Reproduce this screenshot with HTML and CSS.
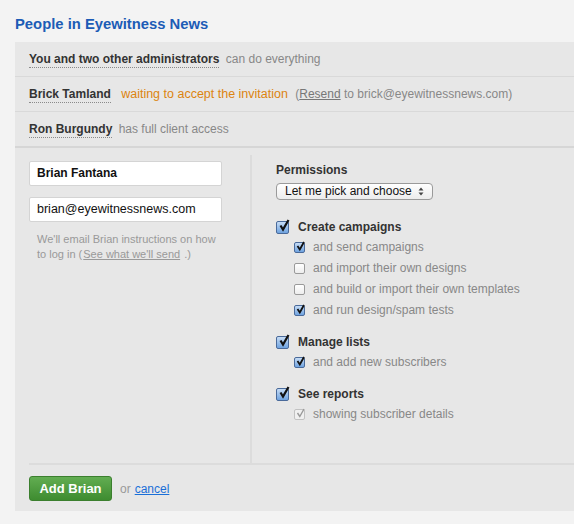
FILE: index.html
```html
<!DOCTYPE html>
<html>
<head>
<meta charset="utf-8">
<link rel="stylesheet" href="styles.css">
</head>
<body>
<h1 class="title">People in Eyewitness News</h1>
<div class="panel">
  <div class="row"><span class="who">You and two other administrators</span> <span class="desc">can do everything</span></div>
  <div class="row"><span class="who">Brick Tamland</span> <span class="pending">waiting to accept the invitation</span> <span class="desc">(<a class="ulink" href="#">Resend</a> to brick@eyewitnessnews.com)</span></div>
  <div class="row"><span class="who">Ron Burgundy</span> <span class="desc">has full client access</span></div>
  <div class="form">
    <div class="cols">
      <div class="left">
        <div class="input bold">Brian Fantana</div>
        <div class="input">brian@eyewitnessnews.com</div>
        <p class="help"><span class="help-line">We'll email Brian instructions on how</span><span class="help-line">to log in (<a class="ulink" href="#">See what we'll send</a> .)</span></p>
      </div>
      <div class="right">
        <div class="perm-title">Permissions</div>
        <div class="select"><span>Let me pick and choose</span>
          <svg class="arrows" width="6" height="9" viewBox="0 0 6 9"><path d="M3 0.5 L5.5 3.5 H0.5 Z M3 8.5 L5.5 5.5 H0.5 Z" fill="#444"/></svg>
        </div>
        <div class="group">
          <div class="main"><span class="cb big on"><svg viewBox="0 0 14 14"><path d="M3.5 6.5 L6 10.5 L11.5 1" fill="none" stroke="#111" stroke-width="2.2"/></svg></span>Create campaigns</div>
          <div class="sub"><span class="cb on"><svg viewBox="0 0 11 11"><path d="M2.5 5 L4.8 8.5 L9 1" fill="none" stroke="#111" stroke-width="1.8"/></svg></span>and send campaigns</div>
          <div class="sub"><span class="cb"></span>and import their own designs</div>
          <div class="sub"><span class="cb"></span>and build or import their own templates</div>
          <div class="sub"><span class="cb on"><svg viewBox="0 0 11 11"><path d="M2.5 5 L4.8 8.5 L9 1" fill="none" stroke="#111" stroke-width="1.8"/></svg></span>and run design/spam tests</div>
        </div>
        <div class="group">
          <div class="main"><span class="cb big on"><svg viewBox="0 0 14 14"><path d="M3.5 6.5 L6 10.5 L11.5 1" fill="none" stroke="#111" stroke-width="2.2"/></svg></span>Manage lists</div>
          <div class="sub"><span class="cb on"><svg viewBox="0 0 11 11"><path d="M2.5 5 L4.8 8.5 L9 1" fill="none" stroke="#111" stroke-width="1.8"/></svg></span>and add new subscribers</div>
        </div>
        <div class="group">
          <div class="main"><span class="cb big on"><svg viewBox="0 0 14 14"><path d="M3.5 6.5 L6 10.5 L11.5 1" fill="none" stroke="#111" stroke-width="2.2"/></svg></span>See reports</div>
          <div class="sub"><span class="cb dis"><svg viewBox="0 0 11 11"><path d="M2.5 5 L4.8 8.5 L9 1" fill="none" stroke="#999" stroke-width="1.4"/></svg></span>showing subscriber details</div>
        </div>
      </div>
    </div>
    <div class="footer">
      <button class="btn">Add Brian</button>
      <span class="or">or</span> <a class="cancel" href="#">cancel</a>
    </div>
  </div>
</div>
</body>
</html>
```

FILE: styles.css
```css
html, body {
  margin: 0;
  padding: 0;
}
body {
  background: #f3f3f3;
  font-family: "Liberation Sans", Arial, sans-serif;
  font-size: 12px;
  color: #333;
}
.title {
  margin: 0;
  padding: 15px 0 0 15px;
  height: 27px;
  font-size: 14.8px;
  font-weight: bold;
  color: #1c5cb6;
  line-height: 18px;
}
.panel {
  margin-left: 15px;
  background: #e7e7e7;
  height: 469px;
}
.row {
  height: 34px;
  line-height: 34px;
  padding-left: 14px;
  border-bottom: 1px solid #d9d9d9;
  white-space: nowrap;
}
.row:nth-child(3) {
  border-bottom: 2px solid #d6d6d6;
}
.who {
  font-weight: bold;
  color: #333;
  border-bottom: 1px dotted #8a8a8a;
  padding-bottom: 1px;
  margin-right: 3px;
}
.desc {
  color: #888;
}
.pending {
  color: #dc8410;
  font-size: 12.5px;
  margin-left: 4px;
  margin-right: 4px;
}
.ulink {
  color: #777;
  text-decoration: underline;
}
.form {
  padding: 7px 0 0 14px;
}
.cols {
  display: flex;
  height: 308px;
}
.left {
  width: 207px;
  padding-top: 6px;
  border-right: 2px solid #dcdcdc;
  box-sizing: content-box;
  padding-right: 14px;
}
.input {
  width: 193px;
  height: 25px;
  box-sizing: border-box;
  background: #fff;
  border: 1px solid #d4d4d4;
  border-radius: 2px;
  font-size: 12.5px;
  color: #111;
  line-height: 23px;
  padding-left: 7px;
  margin-bottom: 11px;
}
.input.bold {
  font-weight: bold;
  font-size: 12px;
}
.help {
  margin: -1px 0 0 8px;
  font-size: 11px;
  line-height: 15px;
  color: #999;
  width: 185px;
}
.help-line {
  display: block;
  white-space: nowrap;
}
.help .ulink {
  color: #999;
  margin: 0 1px;
}
.right {
  padding-left: 24px;
  padding-top: 7px;
}
.perm-title {
  font-weight: bold;
  line-height: 16px;
  margin-bottom: 5px;
}
.select {
  width: 157px;
  height: 17px;
  box-sizing: border-box;
  border: 1px solid #9a9a9a;
  border-radius: 4px;
  background: linear-gradient(#ffffff, #ececec);
  font-size: 12px;
  line-height: 15px;
  color: #111;
  padding-left: 8px;
  display: flex;
  align-items: center;
  justify-content: space-between;
  padding-right: 8px;
  margin-bottom: 19px;
}
.arrows {
  display: block;
}
.group {
  margin-bottom: 16px;
}
.main {
  display: flex;
  align-items: center;
  height: 16px;
  font-weight: bold;
  color: #333;
  margin-bottom: 4px;
}
.sub {
  display: flex;
  align-items: center;
  height: 16px;
  color: #888;
  padding-left: 18px;
  margin-bottom: 5px;
}
.cb {
  display: inline-block;
  box-sizing: border-box;
  width: 11px;
  height: 11px;
  border: 1px solid #9a9a9a;
  border-radius: 2px;
  background: linear-gradient(#ffffff, #ededed);
  margin-right: 8px;
  position: relative;
  flex: none;
}
.cb svg {
  position: absolute;
  left: 0;
  top: -2px;
  width: 11px;
  height: 11px;
}
.cb.on {
  border-color: #4a6a9a;
  background: linear-gradient(#c6dcf5, #6fa3e0);
}
.cb.big {
  width: 13px;
  height: 13px;
  margin-right: 9px;
}
.cb.big svg {
  width: 14px;
  height: 14px;
  top: -3px;
  left: 0;
}
.cb.dis {
  border-color: #c2c2c2;
  background: #f0f0f0;
}
.footer {
  border-top: 2px solid #dcdcdc;
  padding-top: 11px;
  display: flex;
  align-items: center;
}
.btn {
  width: 83px;
  height: 25px;
  border: 1px solid #3b7f2e;
  border-radius: 3px;
  background: linear-gradient(#62ad52, #3e8c30);
  color: #fff;
  font-family: "Liberation Sans", Arial, sans-serif;
  font-size: 13px;
  font-weight: bold;
  padding: 0;
  margin-right: 8px;
}
.or {
  color: #999;
  margin-right: 4px;
}
.cancel {
  color: #1a6fd8;
  text-decoration: underline;
}
```
